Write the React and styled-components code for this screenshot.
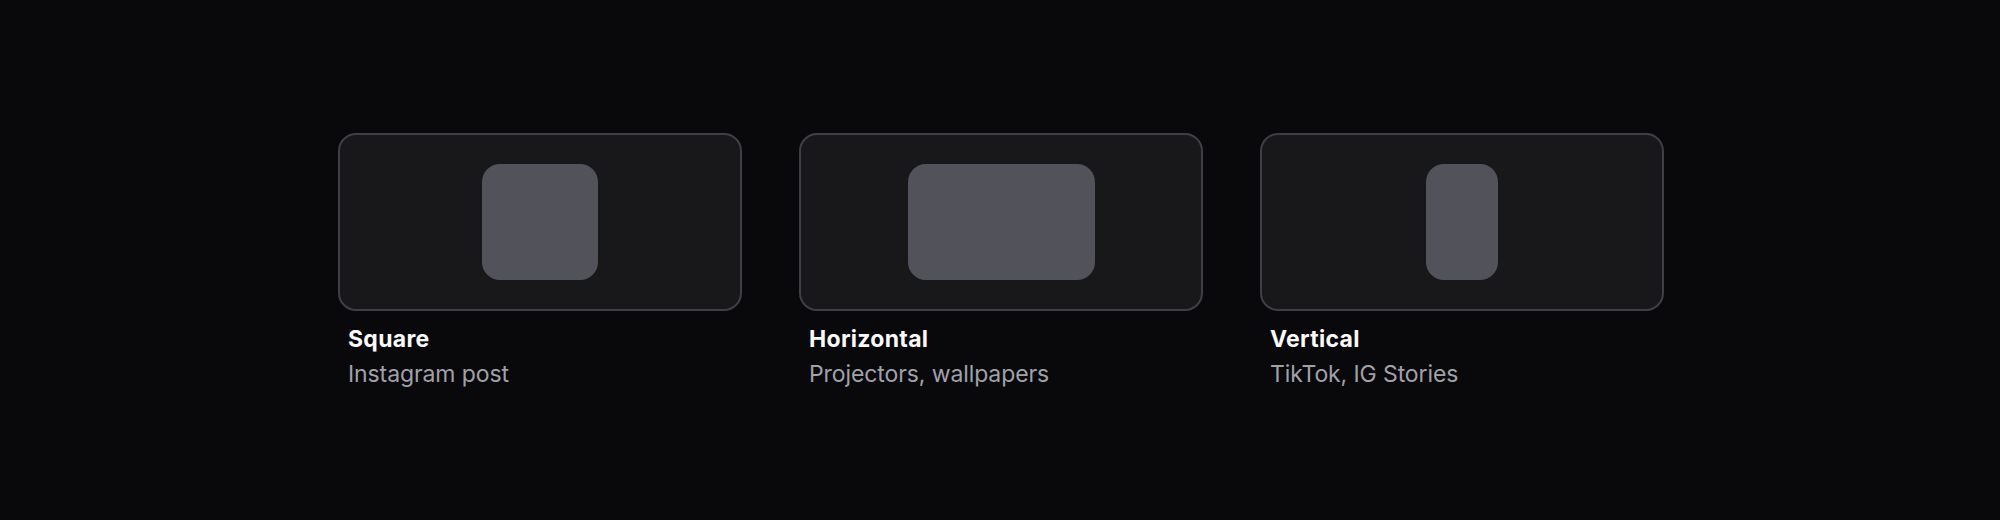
import React from "react";
import styled, { createGlobalStyle } from "styled-components";

const GlobalStyle = createGlobalStyle`
  html, body {
    margin: 0;
    padding: 0;
    background: #09090b;
  }
  body {
    font-family: Inter, "Noto Sans", sans-serif;
    -webkit-font-smoothing: antialiased;
  }
`;

const Page = styled.div`
  min-height: 100vh;
  display: flex;
  align-items: center;
  justify-content: center;
`;

const FormatGrid = styled.div`
  display: grid;
  grid-template-columns: repeat(3, 404px);
  gap: 57px;
  margin-left: 2px;
`;

const FormatOption = styled.div`
  display: flex;
  flex-direction: column;
  cursor: pointer;
`;

const Preview = styled.div`
  height: 116px;
  padding: 29px 0;
  display: flex;
  align-items: center;
  justify-content: center;
  background: #18181b;
  border: 2px solid #3f3f46;
  border-radius: 18px;
`;

const Shape = styled.div`
  width: ${(p) => p.$w}px;
  height: 116px;
  background: #52525b;
  border-radius: 18px;
`;

const Label = styled.div`
  padding: 14px 10px 0;
`;

const Title = styled.div`
  font-size: 23px;
  line-height: 28px;
  font-weight: 700;
  color: #fafafa;
  letter-spacing: 0.3px;
`;

const Caption = styled.div`
  margin-top: 7px;
  font-size: 23px;
  line-height: 28px;
  font-weight: 400;
  color: #a1a1aa;
  letter-spacing: -0.1px;
`;

const formats = [
  { name: "Square", hint: "Instagram post", width: 116 },
  { name: "Horizontal", hint: "Projectors, wallpapers", width: 187 },
  { name: "Vertical", hint: "TikTok, IG Stories", width: 72 },
];

export default function App() {
  return (
    <>
      <GlobalStyle />
      <Page>
        <FormatGrid>
          {formats.map((f) => (
            <FormatOption key={f.name}>
              <Preview>
                <Shape $w={f.width} />
              </Preview>
              <Label>
                <Title>{f.name}</Title>
                <Caption>{f.hint}</Caption>
              </Label>
            </FormatOption>
          ))}
        </FormatGrid>
      </Page>
    </>
  );
}
